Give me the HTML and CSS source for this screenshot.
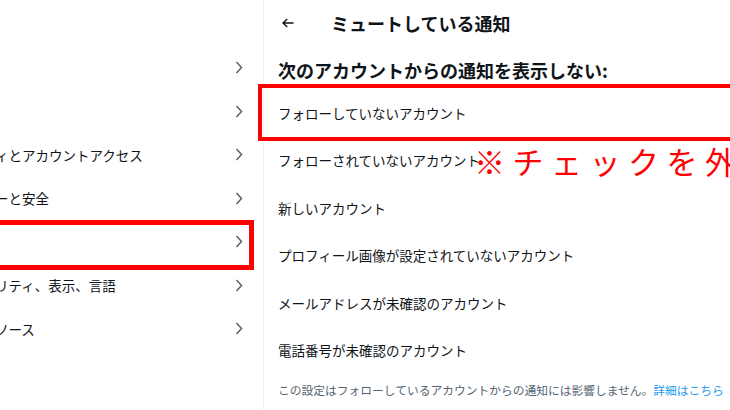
FILE: index.html
```html
<!DOCTYPE html>
<html lang="ja">
<head>
  <meta charset="UTF-8" />
  <meta name="viewport" content="width=device-width, initial-scale=1.0"/>
  <title>ミュートしている通知</title>
  <link rel="stylesheet" href="styles.css">
</head>
<body>
  <div class="page">
    <!-- left column is scrolled out of view, only the tail of each label shows -->
    <aside class="settings-nav">
      <a class="nav-row" href="#"><span class="nav-label"></span><svg class="chevron" viewBox="0 0 8 13"><path d="M1.5 1 L6.5 6.5 L1.5 12"/></svg></a>
      <a class="nav-row" href="#"><span class="nav-label"></span><svg class="chevron" viewBox="0 0 8 13"><path d="M1.5 1 L6.5 6.5 L1.5 12"/></svg></a>
      <a class="nav-row" href="#"><span class="nav-label">ィとアカウントアクセス</span><svg class="chevron" viewBox="0 0 8 13"><path d="M1.5 1 L6.5 6.5 L1.5 12"/></svg></a>
      <a class="nav-row" href="#"><span class="nav-label">ーと安全</span><svg class="chevron" viewBox="0 0 8 13"><path d="M1.5 1 L6.5 6.5 L1.5 12"/></svg></a>
      <a class="nav-row" href="#"><span class="nav-label"></span><svg class="chevron" viewBox="0 0 8 13"><path d="M1.5 1 L6.5 6.5 L1.5 12"/></svg></a>
      <a class="nav-row" href="#"><span class="nav-label">リティ、表示、言語</span><svg class="chevron" viewBox="0 0 8 13"><path d="M1.5 1 L6.5 6.5 L1.5 12"/></svg></a>
      <a class="nav-row" href="#"><span class="nav-label">ソース</span><svg class="chevron" viewBox="0 0 8 13"><path d="M1.5 1 L6.5 6.5 L1.5 12"/></svg></a>
    </aside>

    <main class="detail">
      <header class="detail-head">
        <svg class="back" viewBox="0 0 12 10"><path d="M1 5 H11.5 M5.2 1 L1 5 L5.2 9"/></svg>
        <h1>ミュートしている通知</h1>
      </header>
      <h2 class="section-title">次のアカウントからの通知を表示しない:</h2>
      <ul class="filter-list">
        <li>フォローしていないアカウント</li>
        <li>フォローされていないアカウント</li>
        <li>新しいアカウント</li>
        <li>プロフィール画像が設定されていないアカウント</li>
        <li>メールアドレスが未確認のアカウント</li>
        <li>電話番号が未確認のアカウント</li>
      </ul>
      <p class="note">この設定はフォローしているアカウントからの通知には影響しません。<a href="#">詳細はこちら</a></p>
    </main>

    <!-- annotations -->
    <div class="mark mark-nav"></div>
    <div class="mark mark-option"></div>
    <p class="mark-text">※チェックを外</p>
  </div>
</body>
</html>
```

FILE: styles.css
```css
* {
  box-sizing: border-box;
  margin: 0;
  padding: 0;
}

body {
  background: #fff;
  color: #0f1419;
  font-family: "Noto Sans CJK JP", "Noto Sans", sans-serif;
  overflow: hidden;
}

.page {
  position: relative;
  display: flex;
  width: 730px;
  height: 410px;
  overflow: hidden;
}

.settings-nav {
  width: 264px;
  flex-shrink: 0;
  padding-top: 46px;
  border-right: 1px solid #eff3f4;
  overflow: hidden;
}

.nav-row {
  display: flex;
  align-items: center;
  justify-content: space-between;
  height: 43.5px;
  padding-right: 20px;
  color: #0f1419;
  text-decoration: none;
  font-size: 13.5px;
}

.nav-label {
  margin-left: -5px;
  white-space: nowrap;
}

.chevron {
  width: 8px;
  height: 13px;
  flex-shrink: 0;
}

.chevron path {
  fill: none;
  stroke: #536471;
  stroke-width: 1.5;
}

.detail {
  flex: 1;
  min-width: 0;
}

.detail-head {
  display: flex;
  align-items: center;
  gap: 37px;
  height: 46px;
  padding-left: 18px;
}

.back {
  width: 12px;
  height: 10px;
}

.back path {
  fill: none;
  stroke: #0f1419;
  stroke-width: 1.4;
}

.detail-head h1 {
  font-size: 18px;
  font-weight: 700;
  white-space: nowrap;
}

.section-title {
  display: flex;
  align-items: center;
  height: 43.3px;
  padding: 4px 0 0 14px;
  font-size: 18px;
  font-weight: 700;
  white-space: nowrap;
}

.filter-list {
  list-style: none;
}

.filter-list li {
  display: flex;
  align-items: center;
  height: 47.4px;
  padding-left: 14px;
  font-size: 13.5px;
  white-space: nowrap;
}

.note {
  padding: 8px 0 0 14px;
  font-size: 11.75px;
  line-height: 16px;
  color: #536471;
  white-space: nowrap;
}

.note a {
  color: #1d9bf0;
  text-decoration: none;
}

.mark {
  position: absolute;
  border: 4px solid #ff0000;
}

.mark-nav {
  left: -10px;
  top: 220px;
  width: 264px;
  height: 50px;
  border-width: 5px;
}

.mark-option {
  left: 258px;
  top: 84px;
  width: 500px;
  height: 57px;
}

.mark-text {
  position: absolute;
  left: 474px;
  top: 145px;
  font-size: 31px;
  line-height: 31px;
  letter-spacing: 7.5px;
  color: #ff0000;
  white-space: nowrap;
}
```
